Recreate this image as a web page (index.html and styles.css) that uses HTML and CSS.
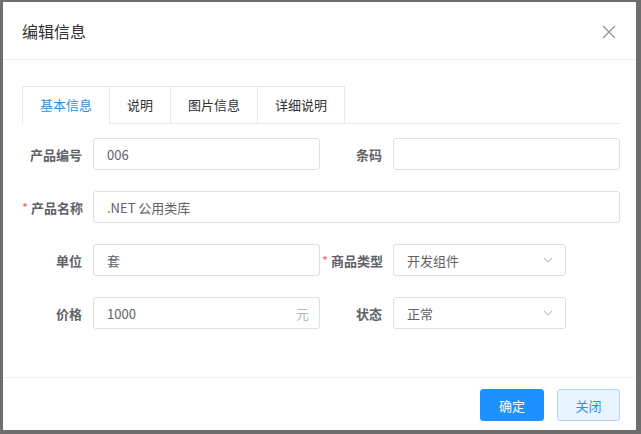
FILE: index.html
```html
<!DOCTYPE html>
<html lang="zh-CN">
<head>
<meta charset="utf-8">
<title>编辑信息</title>
<link rel="stylesheet" href="styles.css">
</head>
<body>
<div class="dialog">
  <div class="header">
    <span class="title">编辑信息</span>
    <svg class="close" width="14" height="14" viewBox="0 0 14 14"><path d="M1 1L13 13M13 1L1 13" stroke="#909399" stroke-width="1.4" fill="none"/></svg>
  </div>
  <div class="body">
    <div class="tabs">
      <div class="tab active">基本信息</div>
      <div class="tab">说明</div>
      <div class="tab">图片信息</div>
      <div class="tab">详细说明</div>
    </div>
    <div class="form">
      <div class="row">
        <div class="field">
          <label class="label">产品编号</label>
          <div class="input"><span class="val">006</span></div>
        </div>
        <div class="field">
          <label class="label">条码</label>
          <div class="input"></div>
        </div>
      </div>
      <div class="row">
        <div class="field wide">
          <label class="label"><span class="req">*</span>产品名称</label>
          <div class="input"><span class="val">.NET 公用类库</span></div>
        </div>
      </div>
      <div class="row">
        <div class="field">
          <label class="label">单位</label>
          <div class="input"><span class="val">套</span></div>
        </div>
        <div class="field">
          <label class="label"><span class="req">*</span>商品类型</label>
          <div class="input select"><span class="val">开发组件</span><svg class="arrow" width="10" height="6" viewBox="0 0 10 6"><path d="M1 1L5 5L9 1" stroke="#c0c4cc" stroke-width="1.1" fill="none"/></svg></div>
        </div>
      </div>
      <div class="row">
        <div class="field">
          <label class="label">价格</label>
          <div class="input"><span class="val">1000</span><span class="suffix">元</span></div>
        </div>
        <div class="field">
          <label class="label">状态</label>
          <div class="input select"><span class="val">正常</span><svg class="arrow" width="10" height="6" viewBox="0 0 10 6"><path d="M1 1L5 5L9 1" stroke="#c0c4cc" stroke-width="1.1" fill="none"/></svg></div>
        </div>
      </div>
    </div>
  </div>
  <div class="footer">
    <button class="btn primary">确定</button>
    <button class="btn plain">关闭</button>
  </div>
</div>
</body>
</html>
```
FILE: styles.css
```css
html, body {
  margin: 0;
  padding: 0;
}
body {
  background: #6e6e6e;
  width: 641px;
  height: 434px;
  overflow: hidden;
  font-family: "Noto Sans CJK SC", "Noto Sans", sans-serif;
  font-size: 13px;
  color: #606266;
}
.dialog {
  width: 633px;
  height: 428px;
  margin: 2px 0 0 3px;
  background: #fff;
  display: flex;
  flex-direction: column;
  box-sizing: border-box;
}
.header {
  height: 58px;
  box-sizing: border-box;
  border-bottom: 1px solid #ececec;
  display: flex;
  align-items: center;
  justify-content: space-between;
  padding: 0 20px 0 19px;
}
.title {
  font-size: 16px;
  color: #303133;
  line-height: 20px;
}
.close {
  display: block;
  margin-top: 2px;
}
.body {
  flex: 1;
  padding: 26px 16px 0 19px;
}
.tabs {
  display: flex;
  height: 38px;
  box-sizing: border-box;
  border-bottom: 1px solid #e4e7ed;
}
.tab {
  height: 37px;
  line-height: 36px;
  padding: 0 17px;
  border-top: 1px solid #e4e7ed;
  border-left: 1px solid #e4e7ed;
  box-sizing: border-box;
  color: #303133;
  font-size: 13px;
}
.tab:last-child {
  border-right: 1px solid #e4e7ed;
}
.tab.active {
  color: #2a8ee8;
  height: 38px;
  background: #fff;
}
.form {
  margin-top: 14px;
  display: flex;
  flex-direction: column;
  gap: 21px;
}
.row {
  display: flex;
  gap: 2px;
}
.field {
  display: flex;
  align-items: center;
  width: 298px;
}
.field.wide {
  width: 598px;
}
.label {
  width: 71px;
  flex: none;
  box-sizing: border-box;
  padding-right: 11px;
  text-align: right;
  font-weight: bold;
  color: #606266;
  white-space: nowrap;
}
.req {
  color: #f56c6c;
  font-weight: normal;
  margin-right: 3px;
}
.input {
  flex: 1;
  height: 32px;
  box-sizing: border-box;
  border: 1px solid #dcdfe6;
  border-radius: 3px;
  display: flex;
  align-items: center;
  padding: 0 10px 0 13px;
  color: #606266;
}
.input.select {
  flex: none;
  width: 173px;
  padding-right: 12px;
}
.val {
  flex: 1;
}
.suffix {
  color: #b4b8bf;
}
.arrow {
  display: block;
}
.footer {
  height: 53px;
  box-sizing: border-box;
  border-top: 1px solid #f0f0f0;
  display: flex;
  justify-content: flex-end;
  align-items: flex-start;
  gap: 13px;
  padding: 11px 16px 0 0;
}
.btn {
  height: 32px;
  box-sizing: border-box;
  border-radius: 3px;
  font-family: "Noto Sans CJK SC", "Noto Sans", sans-serif;
  font-size: 13px;
  padding: 0;
}
.btn.primary {
  width: 64px;
  background: #1e90ff;
  border: 1px solid #1e90ff;
  color: #fff;
}
.btn.plain {
  width: 63px;
  background: #e8f4ff;
  border: 1px solid #b0d6fb;
  color: #1e90ff;
}
```
